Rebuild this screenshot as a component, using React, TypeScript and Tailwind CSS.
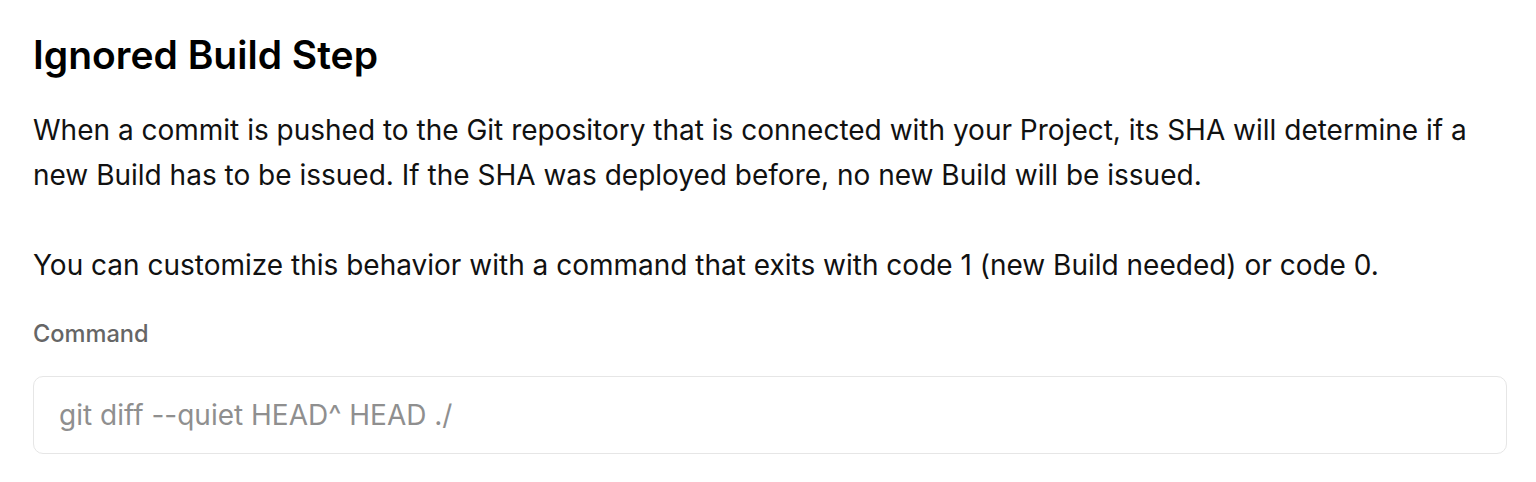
export default function App() {
  return (
    <div className="w-[1536px] h-[482px] bg-white text-black font-['Inter',sans-serif] px-[33px] pt-[30px]">
      <h1 className="text-[39px] leading-[50px] font-semibold">Ignored Build Step</h1>
      <div className="mt-[28px] w-[1474px] text-[28px] leading-[45px] text-[#111]">
        <p>
          When a commit is pushed to the Git repository that is connected with your Project, its SHA will determine if a
          new Build has to be issued. If the SHA was deployed before, no new Build will be issued.
        </p>
        <p className="mt-[45px]">
          You can customize this behavior with a command that exits with code 1 (new Build needed) or code 0.
        </p>
      </div>
      <label className="block mt-[30px] text-[23.6px] leading-[32px] font-medium text-[#666]">Command</label>
      <div className="mt-[26px] w-[1474px] h-[78px] rounded-[10px] border border-[#e6e6e6] flex items-center px-[25px]">
        <input
          className="w-full outline-none bg-transparent text-[28px] placeholder:text-[#8f8f8f]"
          placeholder="git diff --quiet HEAD^ HEAD ./"
        />
      </div>
    </div>
  );
}
